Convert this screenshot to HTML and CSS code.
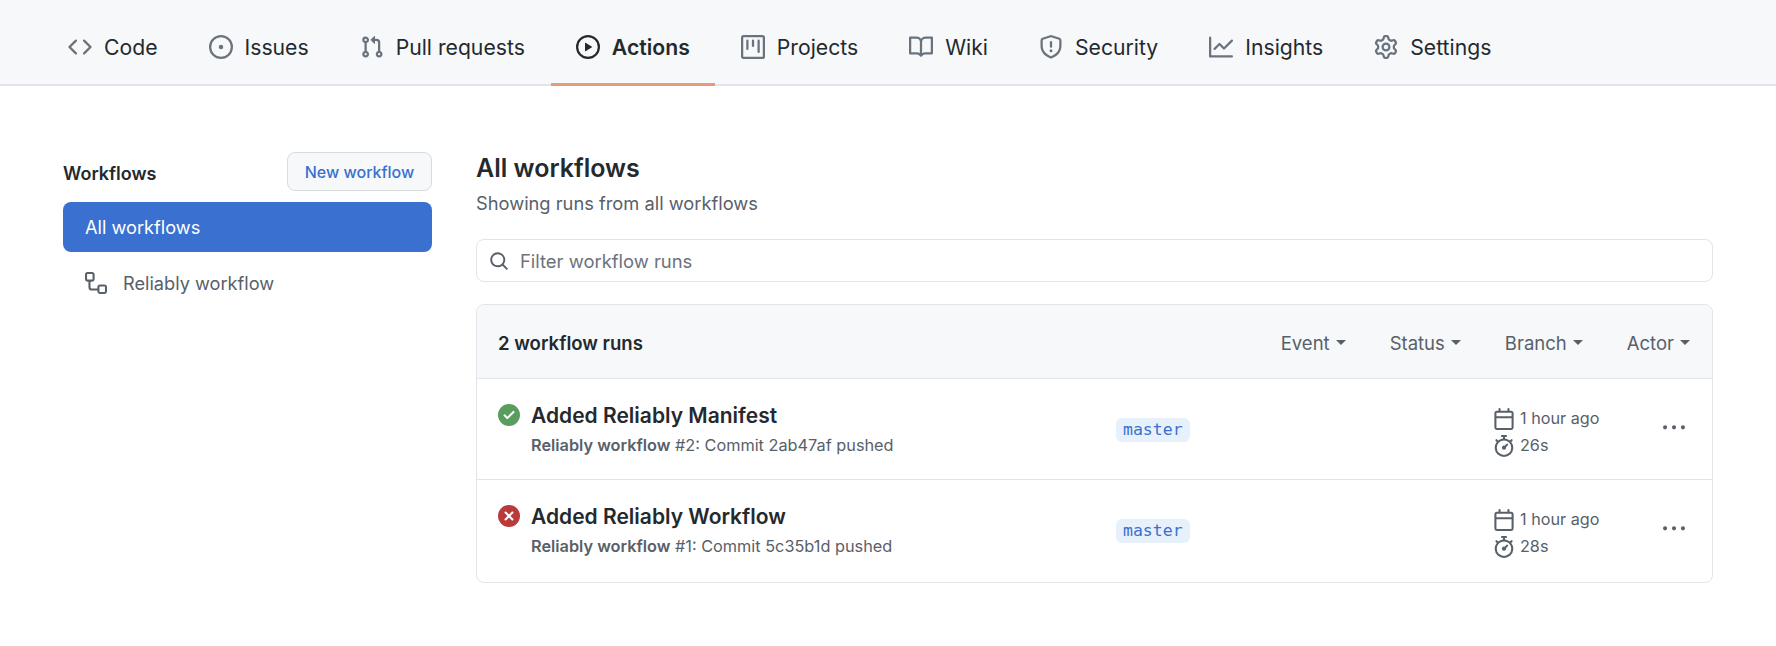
FILE: index.html
```html
<!DOCTYPE html>
<html lang="en">
<head>
  <meta charset="UTF-8" />
  <meta name="viewport" content="width=device-width, initial-scale=1.0" />
  <title>Actions - All workflows</title>
  <link rel="stylesheet" href="styles.css">
</head>
<body>
  <svg class="sprite" aria-hidden="true">
    <symbol id="i-code" viewBox="0 0 16 16"><path d="M4.72 3.22a.75.75 0 011.06 1.06L2.06 8l3.72 3.72a.75.75 0 11-1.06 1.06L.47 8.53a.75.75 0 010-1.06l4.25-4.25zm6.56 0a.75.75 0 10-1.06 1.06L13.94 8l-3.72 3.72a.75.75 0 101.06 1.06l4.25-4.25a.75.75 0 000-1.06l-4.25-4.25z"/></symbol>
    <symbol id="i-issue" viewBox="0 0 16 16"><path d="M8 9.5a1.5 1.5 0 100-3 1.5 1.5 0 000 3z"/><path fill-rule="evenodd" d="M8 0a8 8 0 100 16A8 8 0 008 0zM1.5 8a6.5 6.5 0 1113 0 6.5 6.5 0 01-13 0z"/></symbol>
    <symbol id="i-pr" viewBox="0 0 16 16"><path fill-rule="evenodd" d="M7.177 3.073L9.573.677A.25.25 0 0110 .854v4.792a.25.25 0 01-.427.177L7.177 3.427a.25.25 0 010-.354zM3.75 2.5a.75.75 0 100 1.5.75.75 0 000-1.5zm-2.25.75a2.25 2.25 0 113 2.122v5.256a2.251 2.251 0 11-1.5 0V5.372A2.25 2.25 0 011.5 3.25zM11 2.5h-1V4h1a1 1 0 011 1v5.628a2.251 2.251 0 101.5 0V5A2.5 2.5 0 0011 2.5zm1 10.25a.75.75 0 111.5 0 .75.75 0 01-1.5 0zM3.75 12a.75.75 0 100 1.5.75.75 0 000-1.5z"/></symbol>
    <symbol id="i-play" viewBox="0 0 16 16"><path fill-rule="evenodd" d="M1.5 8a6.5 6.5 0 1113 0 6.5 6.5 0 01-13 0zM8 0a8 8 0 100 16A8 8 0 008 0zM6.379 5.227A.25.25 0 006 5.442v5.117a.25.25 0 00.379.214l4.264-2.559a.25.25 0 000-.428L6.379 5.227z"/></symbol>
    <symbol id="i-project" viewBox="0 0 16 16"><path fill-rule="evenodd" d="M1.75 0A1.75 1.75 0 000 1.75v12.5C0 15.216.784 16 1.75 16h12.5A1.75 1.75 0 0016 14.25V1.75A1.75 1.75 0 0014.25 0H1.75zM1.5 1.75a.25.25 0 01.25-.25h12.5a.25.25 0 01.25.25v12.5a.25.25 0 01-.25.25H1.75a.25.25 0 01-.25-.25V1.75zM11.75 3a.75.75 0 00-.75.75v7.5a.75.75 0 001.5 0v-7.5a.75.75 0 00-.75-.75zm-8.25.75a.75.75 0 011.5 0v5.5a.75.75 0 01-1.5 0v-5.5zM8 3a.75.75 0 00-.75.75v3.5a.75.75 0 001.5 0v-3.5A.75.75 0 008 3z"/></symbol>
    <symbol id="i-book" viewBox="0 0 16 16"><path fill-rule="evenodd" d="M0 1.75A.75.75 0 01.75 1h4.253c1.227 0 2.317.59 3 1.501A3.744 3.744 0 0111.006 1h4.245a.75.75 0 01.75.75v10.5a.75.75 0 01-.75.75h-4.507a2.25 2.25 0 00-1.591.659l-.622.621a.75.75 0 01-1.06 0l-.622-.621A2.25 2.25 0 005.258 13H.75a.75.75 0 01-.75-.75V1.75zm8.755 3a2.25 2.25 0 012.25-2.25H14.5v9h-3.757c-.71 0-1.4.201-1.992.572l.004-7.322zm-1.504 7.324l.004-5.073-.002-2.253A2.25 2.25 0 005.003 2.5H1.5v9h3.757a3.75 3.75 0 011.994.574z"/></symbol>
    <symbol id="i-shield" viewBox="0 0 16 16"><path fill-rule="evenodd" d="M7.467.133a1.75 1.75 0 011.066 0l5.25 1.68A1.75 1.75 0 0115 3.48V7c0 1.566-.32 3.182-1.303 4.682-.983 1.498-2.585 2.813-5.032 3.855a1.7 1.7 0 01-1.33 0c-2.447-1.042-4.049-2.357-5.032-3.855C1.32 10.182 1 8.566 1 7V3.48a1.75 1.75 0 011.217-1.667l5.25-1.68zm.61 1.429a.25.25 0 00-.153 0l-5.25 1.68a.25.25 0 00-.174.238V7c0 1.358.275 2.666 1.057 3.86.784 1.194 2.121 2.34 4.366 3.297a.2.2 0 00.154 0c2.245-.956 3.582-2.104 4.366-3.298C13.225 9.666 13.5 8.36 13.5 7V3.48a.25.25 0 00-.174-.237l-5.25-1.68zM9 10.5a1 1 0 11-2 0 1 1 0 012 0zm-.25-5.75a.75.75 0 10-1.5 0v3a.75.75 0 001.5 0v-3z"/></symbol>
    <symbol id="i-graph" viewBox="0 0 16 16"><path fill-rule="evenodd" d="M1.5 1.75a.75.75 0 00-1.5 0v12.5c0 .414.336.75.75.75h14.5a.75.75 0 000-1.5H1.5V1.75zm14.28 2.53a.75.75 0 00-1.06-1.06L10 7.94 7.53 5.47a.75.75 0 00-1.06 0L3.22 8.72a.75.75 0 001.06 1.06L7 7.06l2.47 2.47a.75.75 0 001.06 0l5.25-5.25z"/></symbol>
    <symbol id="i-gear" viewBox="0 0 16 16"><path fill-rule="evenodd" d="M7.429 1.525a6.593 6.593 0 011.142 0c.036.003.108.036.137.146l.289 1.105c.147.56.55.967.997 1.189.174.086.341.183.501.29.417.278.97.423 1.53.27l1.102-.303c.11-.03.175.016.195.046.219.31.41.641.573.989.014.031.022.11-.059.19l-.815.806c-.411.406-.562.957-.53 1.456a4.588 4.588 0 010 .582c-.032.499.119 1.05.53 1.456l.815.806c.08.08.073.159.059.19a6.494 6.494 0 01-.573.99c-.02.029-.086.074-.195.045l-1.103-.303c-.559-.153-1.112-.008-1.529.27-.16.107-.327.204-.5.29-.449.222-.851.628-.998 1.189l-.289 1.105c-.029.11-.101.143-.137.146a6.613 6.613 0 01-1.142 0c-.036-.003-.108-.037-.137-.146l-.289-1.105c-.147-.56-.55-.967-.997-1.189a4.502 4.502 0 01-.501-.29c-.417-.278-.97-.423-1.53-.27l-1.102.303c-.11.03-.175-.016-.195-.046a6.492 6.492 0 01-.573-.989c-.014-.031-.022-.11.059-.19l.815-.806c.411-.406.562-.957.53-1.456a4.587 4.587 0 010-.582c.032-.499-.119-1.05-.53-1.456l-.815-.806c-.08-.08-.073-.159-.059-.19a6.44 6.44 0 01.573-.99c.02-.029.086-.075.195-.045l1.103.303c.559.153 1.112.008 1.529-.27.16-.107.327-.204.5-.29.449-.222.851-.628.998-1.189l.289-1.105c.029-.11.101-.143.137-.146zM8 0c-.236 0-.47.01-.701.03-.743.065-1.29.615-1.458 1.261l-.29 1.106c-.017.066-.078.158-.211.224a5.994 5.994 0 00-.668.386c-.123.082-.233.09-.3.071L3.27 2.776c-.644-.177-1.392.02-1.82.63a7.977 7.977 0 00-.704 1.217c-.315.675-.111 1.422.363 1.891l.815.806c.05.048.098.147.088.294a6.084 6.084 0 000 .772c.01.147-.038.246-.088.294l-.815.806c-.474.469-.678 1.216-.363 1.891.2.428.436.835.704 1.218.428.609 1.176.806 1.82.63l1.103-.303c.066-.019.176-.011.299.071.213.143.436.272.668.386.133.066.194.158.212.224l.289 1.106c.169.646.715 1.196 1.458 1.26a8.094 8.094 0 001.402 0c.743-.064 1.29-.614 1.458-1.26l.29-1.106c.017-.066.078-.158.211-.224a5.98 5.98 0 00.668-.386c.123-.082.233-.09.3-.071l1.102.302c.644.177 1.392-.02 1.82-.63.268-.382.505-.789.704-1.217.315-.675.111-1.422-.364-1.891l-.814-.806c-.05-.048-.098-.147-.088-.294a6.1 6.1 0 000-.772c-.01-.147.039-.246.088-.294l.814-.806c.475-.469.679-1.216.364-1.891a7.992 7.992 0 00-.704-1.218c-.428-.609-1.176-.806-1.82-.63l-1.103.303c-.066.019-.176.011-.299-.071a5.991 5.991 0 00-.668-.386c-.133-.066-.194-.158-.212-.224L10.16 1.29C9.99.645 9.444.095 8.701.031A8.094 8.094 0 008 0zm1.5 8a1.5 1.5 0 11-3 0 1.5 1.5 0 013 0zM11 8a3 3 0 11-6 0 3 3 0 016 0z"/></symbol>
    <symbol id="i-workflow" viewBox="0 0 16 16"><path fill-rule="evenodd" d="M0 1.75C0 .784.784 0 1.75 0h3.5C6.216 0 7 .784 7 1.75v3.5A1.75 1.75 0 0 1 5.25 7H4v4a1 1 0 0 0 1 1h4v-1.25C9 9.784 9.784 9 10.75 9h3.5c.966 0 1.75.784 1.75 1.75v3.5A1.75 1.75 0 0 1 14.25 16h-3.5A1.75 1.75 0 0 1 9 14.25v-.75H5A2.5 2.5 0 0 1 2.5 11V7h-.75A1.75 1.75 0 0 1 0 5.25Zm1.75-.25a.25.25 0 0 0-.25.25v3.5c0 .138.112.25.25.25h3.5a.25.25 0 0 0 .25-.25v-3.5a.25.25 0 0 0-.25-.25Zm9 9a.25.25 0 0 0-.25.25v3.5c0 .138.112.25.25.25h3.5a.25.25 0 0 0 .25-.25v-3.5a.25.25 0 0 0-.25-.25Z"/></symbol>
    <symbol id="i-search" viewBox="0 0 16 16"><path fill-rule="evenodd" d="M11.5 7a4.499 4.499 0 11-8.998 0A4.499 4.499 0 0111.5 7zm-.82 4.74a6 6 0 111.06-1.06l3.04 3.04a.75.75 0 11-1.06 1.06l-3.04-3.04z"/></symbol>
    <symbol id="i-check" viewBox="0 0 16 16"><path fill-rule="evenodd" d="M8 16A8 8 0 108 0a8 8 0 000 16zm3.78-9.72a.75.75 0 00-1.06-1.06L6.75 9.19 5.28 7.72a.75.75 0 00-1.06 1.06l2 2a.75.75 0 001.06 0l4.5-4.5z"/></symbol>
    <symbol id="i-x" viewBox="0 0 16 16"><path fill-rule="evenodd" d="M2.343 13.657A8 8 0 1113.657 2.343 8 8 0 012.343 13.657zM6.03 4.97a.75.75 0 00-1.06 1.06L6.94 8 4.97 9.97a.75.75 0 101.06 1.06L8 9.06l1.97 1.97a.75.75 0 101.06-1.06L9.06 8l1.97-1.97a.75.75 0 10-1.06-1.06L8 6.94 6.03 4.97z"/></symbol>
    <symbol id="i-calendar" viewBox="0 0 16 16"><path fill-rule="evenodd" d="M4.75 0a.75.75 0 01.75.75V2h5V.75a.75.75 0 011.5 0V2h1.25c.966 0 1.75.784 1.75 1.75v10.5A1.75 1.75 0 0113.25 16H2.75A1.75 1.75 0 011 14.25V3.75C1 2.784 1.784 2 2.75 2H4V.75A.75.75 0 014.75 0zm0 3.5h8.5a.25.25 0 01.25.25V6h-11V3.75a.25.25 0 01.25-.25h2zm-2.25 4v6.75c0 .138.112.25.25.25h10.5a.25.25 0 00.25-.25V7.5h-11z"/></symbol>
    <symbol id="i-stopwatch" viewBox="0 0 16 16"><path fill-rule="evenodd" d="M5.75.75A.75.75 0 016.5 0h3a.75.75 0 010 1.5h-.75v1l-.001.041a6.718 6.718 0 013.464 1.435l.007-.006.75-.75a.75.75 0 111.06 1.06l-.75.75-.006.007a6.75 6.75 0 11-10.548 0L2.72 5.03l-.75-.75a.75.75 0 011.06-1.06l.75.75.007.006A6.718 6.718 0 017.25 2.541a.81.81 0 010-.041v-1H6.5a.75.75 0 01-.75-.75zM8 14.5A5.25 5.25 0 108 4a5.25 5.25 0 000 10.5zm.389-6.7l1.33-1.33a.75.75 0 111.061 1.06L9.45 8.861A1.502 1.502 0 018 10.75a1.5 1.5 0 11.389-2.95z"/></symbol>
    <symbol id="i-kebab" viewBox="0 0 16 16"><path d="M8 9a1.5 1.5 0 100-3 1.5 1.5 0 000 3zM1.5 9a1.5 1.5 0 100-3 1.5 1.5 0 000 3zm13 0a1.5 1.5 0 100-3 1.5 1.5 0 000 3z"/></symbol>
  </svg>

  <nav class="tabs">
    <a class="tab"><svg class="icon"><use href="#i-code"/></svg>Code</a>
    <a class="tab"><svg class="icon"><use href="#i-issue"/></svg>Issues</a>
    <a class="tab"><svg class="icon"><use href="#i-pr"/></svg>Pull requests</a>
    <a class="tab active"><svg class="icon"><use href="#i-play"/></svg>Actions</a>
    <a class="tab"><svg class="icon"><use href="#i-project"/></svg>Projects</a>
    <a class="tab"><svg class="icon"><use href="#i-book"/></svg>Wiki</a>
    <a class="tab"><svg class="icon"><use href="#i-shield"/></svg>Security</a>
    <a class="tab"><svg class="icon"><use href="#i-graph"/></svg>Insights</a>
    <a class="tab"><svg class="icon"><use href="#i-gear"/></svg>Settings</a>
  </nav>

  <div class="layout">
    <aside class="sidebar">
      <div class="sidebar-head">
        <h2>Workflows</h2>
        <button type="button" class="new-btn">New workflow</button>
      </div>
      <a class="side-item selected">All workflows</a>
      <a class="side-item"><svg class="icon"><use href="#i-workflow"/></svg>Reliably workflow</a>
    </aside>

    <main class="main">
      <h1>All workflows</h1>
      <p class="subtitle">Showing runs from all workflows</p>

      <div class="search">
        <svg class="icon"><use href="#i-search"/></svg>
        <input type="text" placeholder="Filter workflow runs" />
      </div>

      <div class="box">
        <div class="box-head">
          <strong>2 workflow runs</strong>
          <div class="filters">
            <span class="filter">Event<i class="caret"></i></span>
            <span class="filter">Status<i class="caret"></i></span>
            <span class="filter">Branch<i class="caret"></i></span>
            <span class="filter">Actor<i class="caret"></i></span>
          </div>
        </div>

        <div class="run">
          <div class="run-info">
            <svg class="icon status ok"><use href="#i-check"/></svg>
            <div>
              <div class="run-title">Added Reliably Manifest</div>
              <div class="run-sub"><b>Reliably workflow</b> #2: Commit 2ab47af pushed</div>
            </div>
          </div>
          <div class="run-branch"><span class="branch">master</span></div>
          <div class="run-meta">
            <div><svg class="icon"><use href="#i-calendar"/></svg>1 hour ago</div>
            <div><svg class="icon"><use href="#i-stopwatch"/></svg>26s</div>
          </div>
          <svg class="icon kebab"><use href="#i-kebab"/></svg>
        </div>

        <div class="run">
          <div class="run-info">
            <svg class="icon status fail"><use href="#i-x"/></svg>
            <div>
              <div class="run-title">Added Reliably Workflow</div>
              <div class="run-sub"><b>Reliably workflow</b> #1: Commit 5c35b1d pushed</div>
            </div>
          </div>
          <div class="run-branch"><span class="branch">master</span></div>
          <div class="run-meta">
            <div><svg class="icon"><use href="#i-calendar"/></svg>1 hour ago</div>
            <div><svg class="icon"><use href="#i-stopwatch"/></svg>28s</div>
          </div>
          <svg class="icon kebab"><use href="#i-kebab"/></svg>
        </div>
      </div>
    </main>
  </div>
</body>
</html>
```

FILE: styles.css
```css
body {
  font-family: Inter, "Liberation Sans", sans-serif;
  background: white;
  color: #24292e;
  margin: 0;
}
.sprite {
  display: none;
}
.icon {
  width: 22px;
  height: 22px;
  fill: currentColor;
  flex: none;
}

/* top tabs */
.tabs {
  display: flex;
  gap: 1px;
  height: 84px;
  padding-left: 43px;
  background: #f6f8fa;
  border-bottom: 2px solid #e1e4e8;
}
.tab {
  display: flex;
  align-items: center;
  gap: 12px;
  padding: 11px 25px 0;
  margin-bottom: -2px;
  border-bottom: 3px solid transparent;
  font-size: 21.2px;
  color: #24292e;
}
.tab .icon {
  width: 24px;
  height: 24px;
  color: #6a737d;
}
.tab.active {
  font-weight: 600;
  border-bottom-color: #e8997f;
}
.tab.active .icon {
  color: #24292e;
}

.layout {
  display: flex;
  gap: 44px;
  padding: 66px 63px 0;
}

/* sidebar */
.sidebar {
  width: 369px;
  flex: none;
}
.sidebar-head {
  display: flex;
  justify-content: space-between;
  align-items: center;
  margin-bottom: 11px;
}
.sidebar-head h2 {
  margin: 3px 0 0;
  font-size: 18px;
  font-weight: 600;
}
.new-btn {
  height: 39px;
  width: 145px;
  padding: 0;
  font-family: inherit;
  font-size: 16px;
  font-weight: 500;
  color: #3a70cf;
  background: #f6f8fa;
  border: 1px solid #d9dcdf;
  border-radius: 8px;
}
.side-item {
  display: flex;
  align-items: center;
  gap: 16px;
  height: 50px;
  padding-left: 22px;
  font-size: 18.2px;
  color: #586069;
  border-radius: 8px;
}
.side-item.selected {
  background: #3a70cf;
  color: white;
  margin-bottom: 6px;
}

/* main column */
.main {
  width: 1237px;
  flex: none;
}
h1 {
  margin: 0;
  font-size: 25px;
  line-height: 32px;
  font-weight: 600;
}
.subtitle {
  margin: 7px 0 0;
  font-size: 18.3px;
  line-height: 24px;
  color: #586069;
}
.search {
  display: flex;
  align-items: center;
  gap: 11px;
  height: 43px;
  margin-top: 24px;
  padding-left: 12px;
  border: 1px solid #e1e4e8;
  border-radius: 8px;
  box-sizing: border-box;
  color: #586069;
}
.search .icon {
  width: 20px;
  height: 20px;
}
.search input {
  flex: 1;
  padding: 0;
  border: none;
  outline: none;
  background: none;
  font-family: inherit;
  font-size: 18.4px;
  color: #24292e;
}
.search input::placeholder {
  color: #6a737d;
}

/* runs list */
.box {
  margin-top: 22px;
  border: 1px solid #e1e4e8;
  border-radius: 8px;
  overflow: hidden;
}
.box-head {
  display: flex;
  justify-content: space-between;
  align-items: center;
  height: 71px;
  padding: 2px 22px 0 21px;
  background: #f6f8fa;
  border-bottom: 1px solid #e1e4e8;
}
.box-head strong {
  font-size: 18.6px;
  font-weight: 600;
}
.filters {
  display: flex;
  gap: 44px;
}
.filter {
  display: flex;
  align-items: center;
  gap: 6px;
  font-size: 18.5px;
  color: #586069;
}
.caret {
  border-top: 5px solid #586069;
  border-left: 5px solid transparent;
  border-right: 5px solid transparent;
}
.run {
  display: grid;
  grid-template-columns: 618px 377px 170px 1fr;
  align-items: center;
  height: 96px;
  padding: 4px 0 0 21px;
  border-bottom: 1px solid #e1e4e8;
}
.run:last-child {
  padding-bottom: 2px;
  border-bottom: none;
}
.run-info {
  display: flex;
  gap: 11px;
  margin-top: -4px;
}
.status {
  margin-top: 2px;
}
.status.ok {
  color: #5a9e5f;
}
.status.fail {
  color: #b93a3a;
}
.run-title {
  font-size: 21px;
  line-height: 28px;
  font-weight: 600;
}
.run-sub {
  margin-top: 4px;
  font-size: 16.3px;
  line-height: 22px;
  color: #586069;
}
.run-sub b {
  font-weight: 600;
}
.run-branch {
  margin-top: -2px;
}
.branch {
  display: inline-block;
  padding: 2px 7px;
  font-family: "DejaVu Sans Mono", monospace;
  font-size: 16.5px;
  line-height: 20px;
  color: #3a70cf;
  background: #e6f1fb;
  border-radius: 6px;
}
.run-meta {
  margin-top: 2px;
  font-size: 16.2px;
  line-height: 27px;
  color: #586069;
}
.run-meta div {
  display: flex;
  align-items: center;
  gap: 5px;
}
.kebab {
  margin-top: -7px;
  color: #586069;
}
```
